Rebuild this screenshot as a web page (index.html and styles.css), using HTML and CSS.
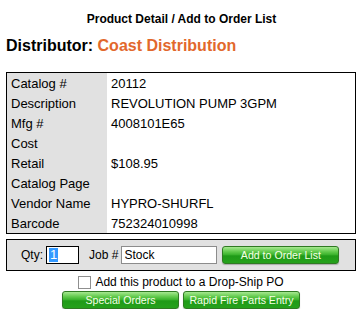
FILE: index.html
```html
<!DOCTYPE html>
<html lang="en">
<head>
  <meta charset="UTF-8">
  <title>Product Detail</title>
  <link rel="stylesheet" href="styles.css">
</head>
<body>

<div class="page">
  <div class="title">Product Detail / Add to Order List</div>
  <h2 class="distributor">Distributor: <span class="dist-name">Coast Distribution</span></h2>

  <table class="detail">
    <tr><td class="lbl">Catalog #</td><td>20112</td></tr>
    <tr><td class="lbl">Description</td><td>REVOLUTION PUMP 3GPM</td></tr>
    <tr><td class="lbl">Mfg #</td><td>4008101E65</td></tr>
    <tr><td class="lbl">Cost</td><td></td></tr>
    <tr><td class="lbl">Retail</td><td>$108.95</td></tr>
    <tr><td class="lbl">Catalog Page</td><td></td></tr>
    <tr><td class="lbl">Vendor Name</td><td>HYPRO-SHURFL</td></tr>
    <tr><td class="lbl">Barcode</td><td>752324010998</td></tr>
  </table>

  <div class="order-box">
    <span class="field-lbl">Qty:</span>
    <span class="qty-field"><span class="sel">1</span></span>
    <span class="field-lbl job-lbl">Job #</span>
    <input type="text" class="job-field" value="Stock">
    <button class="green-btn add-btn">Add to Order List</button>
  </div>

  <div class="dropship">
    <input type="checkbox" id="dropShip" class="chk">
    <label for="dropShip">Add this product to a Drop-Ship PO</label>
  </div>

  <div class="actions">
    <button class="green-btn">Special Orders</button>
    <button class="green-btn">Rapid Fire Parts Entry</button>
  </div>
</div>

</body>
</html>
```

FILE: styles.css
```css
body {
  font-family: "Liberation Sans", Arial, sans-serif;
  margin: 0;
  padding: 0;
  background: #fff;
  color: #000;
}
.page {
  width: 350px;
  padding-left: 6px;
}
.title {
  margin-top: 12px;
  font-size: 12px;
  line-height: 14px;
  font-weight: bold;
  text-align: center;
  padding-left: 1px;
}
.distributor {
  margin: 11px 0 0 0;
  font-size: 16px;
  line-height: 18px;
}
.dist-name {
  color: #e2682c;
}
.detail {
  width: 350px;
  margin-top: 17px;
  border: 1px solid #000;
  border-collapse: collapse;
}
.detail td {
  height: 20px;
  padding: 0 4px;
  font-size: 13px;
  line-height: 15px;
  border: 0;
}
.detail td.lbl {
  width: 92px;
  background-color: #e1e1e1;
}
.order-box {
  margin-top: 5px;
  height: 30px;
  border: 1px solid #000;
  background-color: #e1e1e1;
  display: flex;
  align-items: center;
  padding-left: 14px;
  font-size: 12px;
}
.field-lbl {
  margin-right: 3px;
}
.job-lbl {
  margin-left: 10px;
}
.qty-field {
  box-sizing: border-box;
  width: 33px;
  height: 18px;
  border: 1px solid #000;
  background: #fff;
  padding: 1px 2px;
  display: flex;
  align-items: stretch;
}
.sel {
  background: #3399ff;
  color: #fff;
  font-size: 13px;
  line-height: 14px;
  padding: 0 1px;
}
.job-field {
  box-sizing: border-box;
  width: 96px;
  height: 18px;
  border: 1px solid #8c8c8c;
  padding: 0 2px;
  margin: 0;
  font-family: "Liberation Sans", Arial, sans-serif;
  font-size: 12px;
}
.green-btn {
  box-sizing: border-box;
  width: 117px;
  height: 18px;
  padding: 0;
  border: 1px solid #2f7a22;
  border-radius: 3px;
  background: linear-gradient(#a6e890 0%, #5fc94a 30%, #37b02a 50%, #1f9a17 55%, #25a11b 100%);
  color: #f6ffe6;
  font-family: "Liberation Sans", Arial, sans-serif;
  font-size: 10.6px;
  line-height: 16px;
  box-shadow: 0 1px 1px rgba(0,0,0,0.25);
}
.add-btn {
  margin-left: 5px;
}
.dropship {
  margin-top: 4px;
  display: flex;
  align-items: center;
  justify-content: center;
  font-size: 12px;
  height: 14px;
}
.chk {
  appearance: none;
  -webkit-appearance: none;
  box-sizing: border-box;
  width: 13px;
  height: 13px;
  margin: 0 4px 0 0;
  border: 1px solid #8f8f8f;
  background: #fff;
}
.actions {
  margin-top: 2px;
  display: flex;
  justify-content: center;
  gap: 4px;
}
```
